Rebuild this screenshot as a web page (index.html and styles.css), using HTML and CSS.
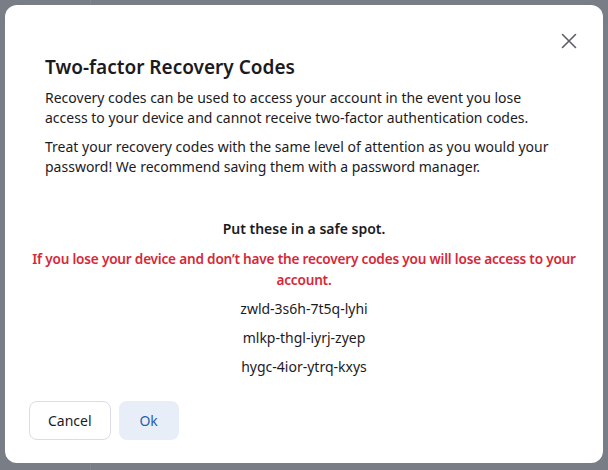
FILE: index.html
```html
<!DOCTYPE html>
<html lang="en">
  <head>
    <meta charset="UTF-8" />
    <meta name="viewport" content="width=device-width, initial-scale=1.0" />
    <title>Two-factor Recovery Codes</title>
    <link rel="stylesheet" href="styles.css">
  </head>
  <body>
    <div class="page">
      <div class="sidebar"></div>
      <div class="main"></div>
    </div>
    <div class="overlay">
      <div class="modal">
        <button type="button" class="close" aria-label="Close">
          <svg width="16" height="16" viewBox="0 0 16 16">
            <path d="M1.5 1.5 L14.5 14.5 M14.5 1.5 L1.5 14.5" stroke="#5b5f6a" stroke-width="1.6" stroke-linecap="round" fill="none" />
          </svg>
        </button>
        <div class="modal-body">
          <h3 class="title">Two-factor Recovery Codes</h3>
          <p>Recovery codes can be used to access your account in the event you lose access to your device and cannot receive two-factor authentication codes.</p>
          <p>Treat your recovery codes with the same level of attention as you would your password! We recommend saving them with a password manager.</p>
        </div>
        <div class="codes">
          <p class="safe">Put these in a safe spot.</p>
          <p class="warning">If you lose your device and don’t have the recovery codes you will lose access to your account.</p>
          <p class="code">zwld-3s6h-7t5q-lyhi</p>
          <p class="code">mlkp-thgl-iyrj-zyep</p>
          <p class="code">hygc-4ior-ytrq-kxys</p>
        </div>
        <div class="footer">
          <button type="button" class="btn btn-cancel">Cancel</button>
          <button type="button" class="btn btn-ok">Ok</button>
        </div>
      </div>
    </div>
  </body>
</html>
```

FILE: styles.css
```css
body {
  margin: 0;
  font-family: "Noto Sans", "Open Sans", sans-serif;
  color: #1b1b1f;
}
.page {
  display: flex;
  height: 100vh;
  background-color: #7a7d86;
}
.sidebar {
  width: 90px;
  border-right: 1px solid #858891;
}
.main {
  flex: 1;
}
.overlay {
  position: fixed;
  inset: 0;
  padding: 5px;
  background-color: rgba(122, 125, 134, 0.2);
}
.modal {
  position: relative;
  height: 458px;
  box-sizing: border-box;
  background-color: #fff;
  border-radius: 12px;
  padding-top: 48px;
}
.close {
  position: absolute;
  top: 28px;
  right: 26px;
  border: none;
  background: none;
  padding: 0;
  cursor: pointer;
}
.modal-body {
  padding: 0 40px;
}
.title {
  margin: 0 0 7px;
  font-size: 19px;
  font-weight: 600;
  line-height: 28px;
}
.modal-body p {
  margin: 0 0 9px;
  font-size: 14px;
  line-height: 20px;
}
.codes {
  padding: 33px 20px 0;
  text-align: center;
  font-size: 14px;
}
.codes p {
  margin: 0 0 9px;
  line-height: 20px;
}
.safe {
  font-weight: 600;
}
.codes .warning {
  color: #d62839;
  font-size: 13.6px;
  font-weight: 600;
  letter-spacing: -0.2px;
  line-height: 21px;
}
.footer {
  display: flex;
  gap: 8px;
  padding: 15px 24px 0;
}
.btn {
  height: 39px;
  padding: 0 18px;
  border-radius: 8px;
  font-family: inherit;
  font-size: 14px;
}
.btn-cancel {
  background-color: #fff;
  border: 1px solid #dcdce8;
  color: #1b1b1f;
}
.btn-ok {
  width: 60px;
  background-color: #e7eef8;
  border: none;
  color: #2d5ea8;
}
```
